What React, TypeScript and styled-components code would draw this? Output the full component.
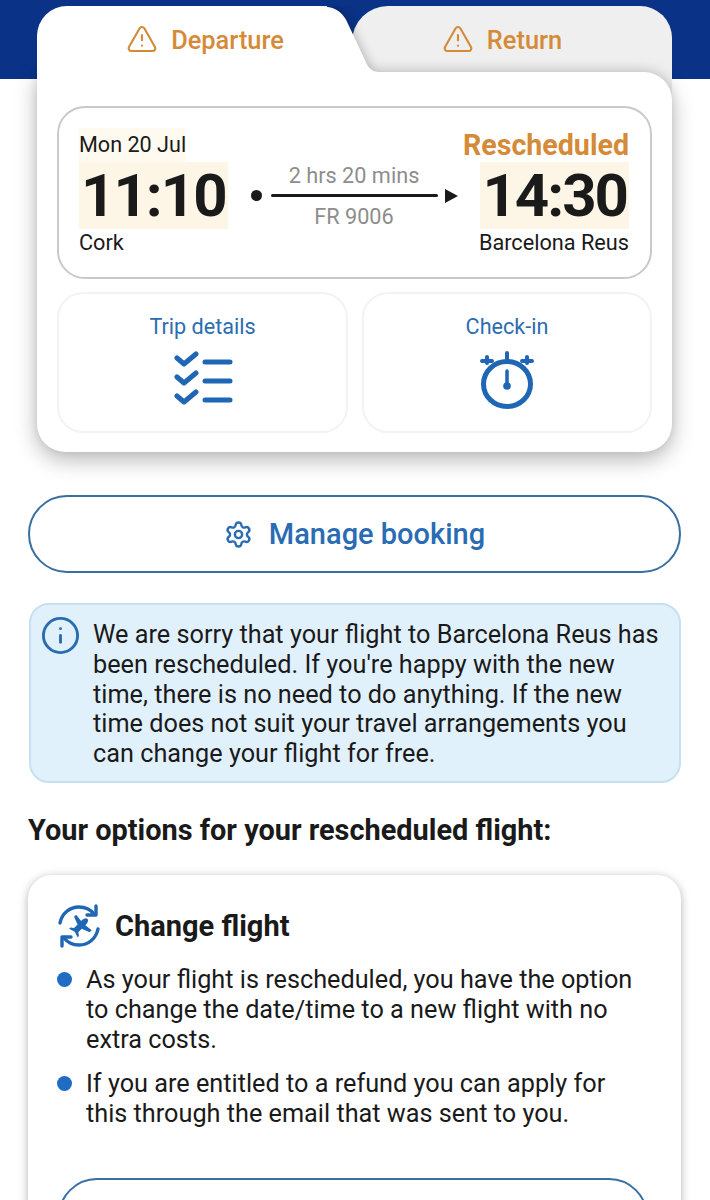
import React, { FC } from 'react';
import styled, { createGlobalStyle } from 'styled-components';
import { Info, Settings, TriangleAlert } from 'lucide-react';

const GlobalStyle = createGlobalStyle`
	html, body {
		margin: 0;
		padding: 0;
		background: #fff;
	}
	body {
		font-family: Roboto, "Liberation Sans", sans-serif;
		color: #1a1a1a;
	}
`;

const Page = styled.div`
	position: relative;
	width: 710px;
	height: 1200px;
	overflow: hidden;
	background: #fff;
`;

const Hero = styled.div`
	background: linear-gradient(#0a3286 79px, #fff 79px);
	padding: 6px 38px 0 37px;
`;

const TabRow = styled.div`
	position: relative;
	display: flex;
	height: 66px;
`;

const Tab = styled.div<{ $active?: boolean }>`
	position: relative;
	box-sizing: border-box;
	display: flex;
	justify-content: center;
	align-items: flex-start;
	gap: 13px;
	padding-top: 17px;
	height: ${p => (p.$active ? 66 : 100)}px;
	font-size: 25.4px;
	line-height: 34px;
	font-weight: 500;
	color: #d58a38;
	background: ${p => (p.$active ? '#fff' : '#efefef')};
	z-index: ${p => (p.$active ? 2 : 0)};
	width: ${p => (p.$active ? 290 : 320)}px;
	margin-left: ${p => (p.$active ? 0 : 25)}px;
	padding-left: ${p => (p.$active ? 46 : 0)}px;
	padding-right: ${p => (p.$active ? 0 : 20)}px;
	border-radius: ${p => (p.$active ? '30px 0 0 0' : '36px 32px 0 0')};
`;

const TabEdge = styled.svg`
	position: absolute;
	left: 277px;
	top: 0;
	width: 100px;
	height: 66px;
	pointer-events: none;
`;

const EdgeShadow = styled.path`
	fill: rgba(0, 0, 0, 0.3);
	filter: blur(6px);
`;

const Card = styled.div`
	position: relative;
	z-index: 1;
	box-sizing: border-box;
	height: 380px;
	padding: 34px 20px 20px;
	background: #fff;
	border-radius: 0 28px 28px 28px;
	box-shadow:
		0 8px 22px rgba(0, 0, 0, 0.28),
		0 -2px 10px rgba(0, 0, 0, 0.1);
`;

const FlightBox = styled.div`
	box-sizing: border-box;
	display: flex;
	justify-content: space-between;
	align-items: center;
	height: 173px;
	padding: 0 21px 0 20px;
	border: 2px solid #c9c9c9;
	border-radius: 28px;
`;

const Leg = styled.div<{ $end?: boolean }>`
	flex: none;
	width: 149px;
	white-space: nowrap;
	display: flex;
	flex-direction: column;
	align-items: ${p => (p.$end ? 'flex-end' : 'flex-start')};
`;

const DateText = styled.div<{ $alert?: boolean }>`
	font-size: ${p => (p.$alert ? 28.6 : 21.6)}px;
	font-weight: ${p => (p.$alert ? 700 : 400)};
	line-height: 34px;
	height: 34px;
	color: ${p => (p.$alert ? '#d58a38' : '#1a1a1a')};
	background: ${p => (p.$alert ? 'transparent' : '#fefaf0')};
`;

const Time = styled.div`
	font-size: 60px;
	line-height: 67px;
	font-weight: 700;
	letter-spacing: -2px;
	padding: 0 2px;
	background: #fdf5e5;
	color: #1a1a1a;
`;

const Place = styled.div`
	font-size: 21.7px;
	line-height: 28px;
	color: #1a1a1a;
`;

const Route = styled.div`
	flex: 1;
	display: flex;
	flex-direction: column;
	align-items: center;
	color: #8d8d8d;
	font-size: 21.7px;
	line-height: 28px;
	margin-top: 8px;
`;

const RouteLine = styled.div`
	position: relative;
	width: 167px;
	height: 3px;
	margin: 4px 0 6px;
	background: #1a1a1a;
	border-radius: 2px;

	&::before {
		content: '';
		position: absolute;
		left: -20px;
		top: -4px;
		width: 11px;
		height: 11px;
		border-radius: 50%;
		background: #1a1a1a;
	}
	&::after {
		content: '';
		position: absolute;
		right: -20px;
		top: -5px;
		border-left: 13px solid #1a1a1a;
		border-top: 7px solid transparent;
		border-bottom: 7px solid transparent;
	}
`;

const Actions = styled.div`
	display: grid;
	grid-template-columns: 291px 290px;
	gap: 14px;
	margin-top: 13px;
`;

const ActionButton = styled.div`
	box-sizing: border-box;
	height: 141px;
	display: flex;
	flex-direction: column;
	align-items: center;
	padding-top: 19px;
	gap: 10px;
	border: 2px solid #f3f3f3;
	border-radius: 26px;
	color: #2c6cb0;
	font-size: 21.6px;
	line-height: 28px;
`;

const Content = styled.div`
	padding: 43px 29px 0 28px;
`;

const PillButton = styled.div`
	box-sizing: border-box;
	display: flex;
	justify-content: center;
	align-items: center;
	gap: 16px;
	height: 78px;
	border: 2px solid #3a6fa3;
	border-radius: 40px;
	color: #2a6cb3;
	font-size: 29px;
	font-weight: 500;
`;

const Notice = styled.div`
	box-sizing: border-box;
	display: flex;
	gap: 12px;
	height: 180px;
	margin: 30px 0 0 1px;
	padding: 15px 14px 0 9px;
	background: #e1f1fc;
	border: 2px solid #c7e0f1;
	border-radius: 20px;
	font-size: 25.27px;
	line-height: 29.8px;
	color: #1a1a1a;
`;

const NoticeIcon = styled(Info)`
	flex: none;
	margin-top: -5px;
	color: #2a6cb0;
`;

const Heading = styled.h2`
	margin: 30px 0 28px;
	font-size: 28.9px;
	line-height: 34px;
	font-weight: 700;
	color: #1a1a1a;
`;

const OptionCard = styled.div`
	box-sizing: border-box;
	height: 420px;
	padding: 29px 40px 0 29px;
	background: #fff;
	border-radius: 24px;
	box-shadow: 0 2px 10px rgba(0, 0, 0, 0.3);
`;

const OptionTitle = styled.div`
	display: flex;
	align-items: center;
	gap: 14px;
	font-size: 29px;
	font-weight: 700;
	line-height: 44px;
	color: #1a1a1a;
`;

const BulletList = styled.ul`
	list-style: none;
	margin: 17px 0 0;
	padding: 0;
`;

const Bullet = styled.li`
	position: relative;
	padding-left: 29px;
	margin-bottom: 15px;
	font-size: 25.25px;
	line-height: 29.8px;
	color: #1a1a1a;

	&::before {
		content: '';
		position: absolute;
		left: 0;
		top: 7px;
		width: 15px;
		height: 15px;
		border-radius: 50%;
		background: #1f6cc2;
	}
`;

const OptionButton = styled(PillButton)`
	margin: 49px 0 0 1px;
	width: 590px;
`;

const Checklist: FC = () => (
	<svg width="60" height="56" viewBox="0 0 60 56" fill="none" stroke="#1f66b5" strokeWidth="5" strokeLinecap="round" strokeLinejoin="round">
		<path d="M4 7l7 6 12-10M4 26l7 6 12-10M4 45l7 6 12-10" />
		<path d="M32 11h25M32 30h25M32 49h25" />
	</svg>
);

const Stopwatch: FC = () => (
	<svg width="54" height="58" viewBox="0 0 54 58" fill="none" stroke="#1f66b5" strokeWidth="5" strokeLinecap="round">
		<ellipse cx="27" cy="33" rx="23.5" ry="22.5" />
		<path d="M27 2v7M2 10h10M7 6v6M42 10h10M47 6v6" strokeWidth="4" />
		<path d="M27 20v15" strokeWidth="3.5" />
		<circle cx="27" cy="35" r="3.8" fill="#1f66b5" stroke="none" />
	</svg>
);

const ChangeFlight: FC = () => (
	<svg width="44" height="44" viewBox="0 0 44 44" fill="none" stroke="#1f66b5" strokeWidth="3.4" strokeLinecap="round" strokeLinejoin="round">
		<path d="M3 19C5 9 13 3 22 3c6 0 11 2 15 7" />
		<path d="M39 2l0 9-9 0" />
		<path d="M41 25c-2 10-10 16-19 16-6 0-11-2-15-7" />
		<path d="M5 42l0-9 9 0" />
		<path d="M23 11c-2 0-3 3-3 6l-8-1 0 3 8 3 0 5-3 2 0 2 6-2 6 2 0-2-3-2 0-5 8-3 0-3-8 1c0-3-1-6-3-6z" transform="rotate(45 22 22)" fill="#1f66b5" stroke="none" />
	</svg>
);

const edgePath = 'M0 0h3c16 0 26 4 32 20l16 34c3 8 7 12 14 12H0z';

export default function App() {
	return (
		<Page>
			<GlobalStyle />
			<Hero>
				<TabRow>
					<Tab $active>
						<TriangleAlert size={32} strokeWidth={1.6} />
						Departure
						<TabEdge viewBox="0 0 100 66">
							<EdgeShadow d={edgePath} />
							<path d={edgePath} fill="#fff" />
						</TabEdge>
					</Tab>
					<Tab>
						<TriangleAlert size={32} strokeWidth={1.6} />
						Return
					</Tab>
				</TabRow>
				<Card>
					<FlightBox>
						<Leg>
							<DateText>Mon 20 Jul</DateText>
							<Time>11:10</Time>
							<Place>Cork</Place>
						</Leg>
						<Route>
							2 hrs 20 mins
							<RouteLine />
							FR 9006
						</Route>
						<Leg $end>
							<DateText $alert>Rescheduled</DateText>
							<Time>14:30</Time>
							<Place>Barcelona Reus</Place>
						</Leg>
					</FlightBox>
					<Actions>
						<ActionButton>
							Trip details
							<Checklist />
						</ActionButton>
						<ActionButton>
							Check-in
							<Stopwatch />
						</ActionButton>
					</Actions>
				</Card>
			</Hero>
			<Content>
				<PillButton>
					<Settings size={29} strokeWidth={2} />
					Manage booking
				</PillButton>
				<Notice>
					<NoticeIcon size={41} strokeWidth={1.7} />
					<div>
						We are sorry that your flight to Barcelona Reus has been rescheduled. If you're happy with the new
						time, there is no need to do anything. If the new time does not suit your travel arrangements you
						can change your flight for free.
					</div>
				</Notice>
				<Heading>Your options for your rescheduled flight:</Heading>
				<OptionCard>
					<OptionTitle>
						<ChangeFlight />
						Change flight
					</OptionTitle>
					<BulletList>
						<Bullet>As your flight is rescheduled, you have the option to change the date/time to a new flight with no extra costs.</Bullet>
						<Bullet>If you are entitled to a refund you can apply for this through the email that was sent to you.</Bullet>
					</BulletList>
					<OptionButton />
				</OptionCard>
			</Content>
		</Page>
	);
}
